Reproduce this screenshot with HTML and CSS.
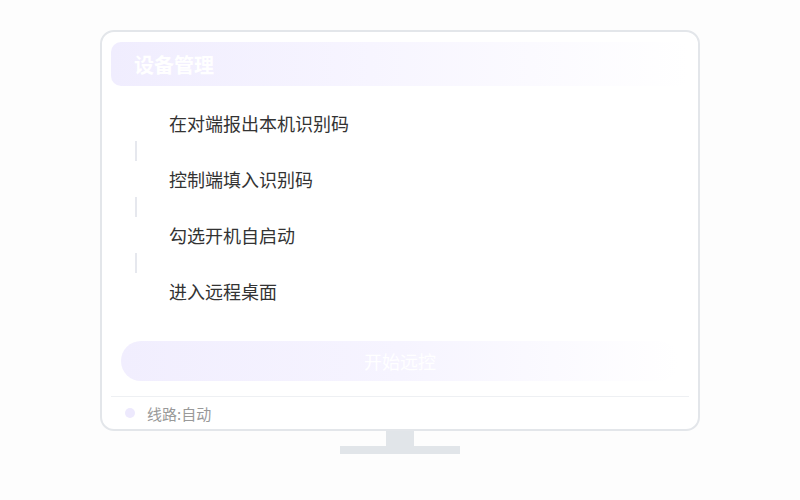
FILE: index.html
```html
<!DOCTYPE html>
<html>
  <head>
    <title>设备管理</title>
    <link rel="stylesheet" href="styles.css">
  </head>
  <body>
    <div class="screen">
      <div class="monitor">
        <div class="header">设备管理</div>
        <div class="steps">
          <div class="step">在对端报出本机识别码</div>
          <div class="link"></div>
          <div class="step">控制端填入识别码</div>
          <div class="link"></div>
          <div class="step">勾选开机自启动</div>
          <div class="link"></div>
          <div class="step">进入远程桌面</div>
        </div>
        <div class="start-btn">开始远控</div>
        <hr />
        <div class="footer">
          <span class="dot"></span>
          <span>线路:自动</span>
        </div>
      </div>
      <div class="neck"></div>
      <div class="base"></div>
    </div>
  </body>
</html>
```

FILE: styles.css
```css
body {
  margin: 0;
  background-color: #fdfdfd;
  font-family: "Noto Sans CJK SC", "Noto Sans", sans-serif;
}

hr {
  height: 1px;
  border: 0;
  margin: 15px 9px 0;
  background-color: #eef0f3;
}

.screen {
  display: flex;
  flex-direction: column;
  align-items: center;
  padding-top: 30px;
}

.monitor {
  width: 596px;
  height: 387px;
  border: 2px solid #e3e6ea;
  border-radius: 14px;
  background-color: #fff;
  padding-top: 10px;
  display: flex;
  flex-direction: column;
}

.header {
  margin: 0 9px;
  height: 44px;
  border-radius: 10px;
  padding-left: 23px;
  display: flex;
  align-items: center;
  font-size: 20px;
  font-weight: bold;
  color: #fff;
  background: linear-gradient(to right, #f0edfe, #f7f5ff 45%, rgba(255, 255, 255, 0));
}

.steps {
  margin-top: 25px;
  padding-left: 67px;
  display: flex;
  flex-direction: column;
}

.step {
  height: 24px;
  line-height: 24px;
  font-size: 18px;
  color: #333;
}

.link {
  width: 2px;
  height: 20px;
  margin: 6px 0 6px -34px;
  background-color: #e6e8ee;
}

.start-btn {
  margin: 38px 19px 0;
  height: 40px;
  border-radius: 20px;
  display: flex;
  align-items: center;
  justify-content: center;
  font-size: 18px;
  color: #fff;
  background: linear-gradient(to right, #f1eefe, #f6f4ff 50%, rgba(255, 255, 255, 0));
}

.footer {
  height: 32px;
  display: flex;
  align-items: center;
  padding-left: 23px;
  font-size: 15px;
  color: #999;
}

.dot {
  width: 10px;
  height: 10px;
  border-radius: 50%;
  background-color: #ede9fd;
  margin-right: 12px;
}

.neck {
  width: 28px;
  height: 15px;
  background-color: #e1e5e9;
}

.base {
  width: 120px;
  height: 8px;
  background-color: #e1e5e9;
}
```
